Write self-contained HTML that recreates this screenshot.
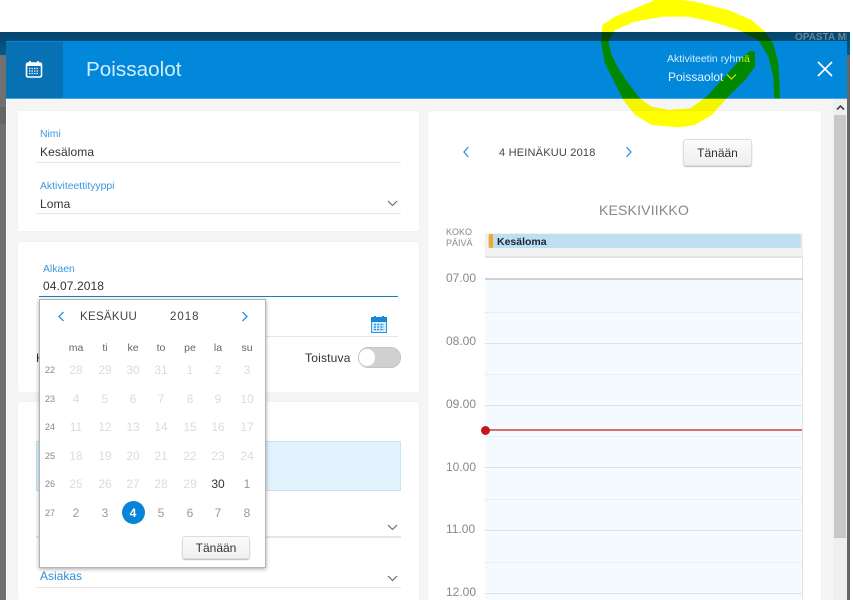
<!DOCTYPE html>
<html><head><meta charset="utf-8"><style>
html,body{margin:0;padding:0;width:853px;height:600px;overflow:hidden;background:#fff}
body{position:relative;font-family:"Liberation Sans",sans-serif;color:#333;font-size:12px}
div,span.t,svg{position:absolute}
.t{position:absolute;white-space:nowrap;line-height:14px;transform:translateY(-7px)}
.c{transform:translate(-50%,-7px);text-align:center}
.card{background:#fff;border-radius:2px;box-shadow:0 0 1px #e0e0e0}
.lab{font-size:10.4px;color:#3b98e0}
.val{font-size:12px;color:#333;letter-spacing:.1px}
.ln{height:1px;background:#e6e6e6}
.wk{font-size:9px;color:#888}
.dh{font-size:10.5px;color:#666}
.d{font-size:12px;color:#dcdcdc}
.a{color:#999}
.hr{left:485px;width:317px;height:1px;background:#dde3e8}
.dash{left:485px;width:317px;height:0;border-top:1px dotted #dfe4e8}
.tm{left:446px;font-size:12px;color:#888}
.btn{background:linear-gradient(#fbfbfb,#efefef);border:1px solid #ddd;border-radius:3px;box-shadow:0 1px 1px #bbb;box-sizing:border-box;text-align:center;font-size:12px;color:#333}
</style></head><body>
<!-- backdrop -->
<div style="left:0;top:55px;width:850px;height:545px;background:#707070"></div>
<div style="left:0;top:107px;width:6px;height:17px;background:#666"></div>
<div style="left:0;top:32px;width:850px;height:23px;background:linear-gradient(#05446c,#045a8c)"></div>
<span class="t" style="left:795px;top:38px;font-size:10px;font-weight:bold;color:#6d8596;width:52px;overflow:hidden">OPASTA MI</span>
<div style="left:847px;top:55px;width:3px;height:545px;background:#666"></div>
<!-- modal -->
<div style="left:6px;top:41px;width:841px;height:559px;background:#f5f5f5"></div>
<div style="left:6px;top:99px;width:1px;height:501px;background:#fff"></div>
<div style="left:6px;top:41px;width:841px;height:58px;background:#0288db;border-bottom:1px solid #47a8e6;box-sizing:border-box"></div>
<div style="left:6px;top:42px;width:57px;height:56px;background:#0871b3"></div>
<svg style="left:25px;top:60px" width="19" height="19" viewBox="0 0 19 19"><rect x="1.500" y="3" width="15" height="14" rx="1.500" fill="none" stroke="#fff" stroke-width="1.600"/><rect x="1.500" y="3" width="15" height="3" fill="#fff"/><path d="M5 1v3M13 1v3" stroke="#fff" stroke-width="1.600"/><path d="M4 8.500h10M4 11h10M4 13.500h10" stroke="#fff" stroke-width="1.200" stroke-dasharray="1.400 1.100"/></svg>
<span class="t" style="left:86px;top:70px;font-size:20.700px;line-height:24px;transform:translateY(-12px);color:#d2ecfb">Poissaolot</span>
<span class="t" style="left:667px;top:59px;font-size:10.500px;color:#d8eefb">Aktiviteetin ryhmä</span>
<span class="t" style="left:668px;top:77px;font-size:12px;color:#e6f4fd">Poissaolot</span>
<svg style="left:726px;top:73px" width="11" height="8" viewBox="0 0 11 8"><path d="M1 1.500l4.500 4.500 4.500-4.500" fill="none" stroke="#dff2ff" stroke-width="1.100"/></svg>
<svg style="left:816px;top:60px" width="18" height="18" viewBox="0 0 18 18"><path d="M2 2l14 14M16 2L2 16" stroke="#fff" stroke-width="1.700"/></svg>
<!-- scrollbar -->
<div style="left:833px;top:99px;width:14px;height:501px;background:#efefef"></div>
<div style="left:834px;top:115px;width:12px;height:423px;background:#c8c8c8"></div>
<svg style="left:836px;top:104px" width="9" height="7" viewBox="0 0 9 7"><path d="M1 5.500l3.500-3.500 3.500 3.500" fill="none" stroke="#444" stroke-width="1.600"/></svg>
<!-- cards -->
<div class="card" style="left:18px;top:111px;width:401px;height:120px"></div>
<div class="card" style="left:18px;top:242px;width:401px;height:150px"></div>
<div class="card" style="left:18px;top:402px;width:401px;height:198px"></div>
<div class="card" style="left:428px;top:111px;width:393px;height:489px"></div>
<!-- card 1 -->
<span class="t lab" style="left:40px;top:135px">Nimi</span>
<span class="t val" style="left:40px;top:152px">Kesäloma</span>
<div class="ln" style="left:36px;top:162px;width:365px"></div>
<span class="t lab" style="left:40px;top:187px">Aktiviteettityyppi</span>
<span class="t val" style="left:40px;top:204px">Loma</span>
<svg style="left:387px;top:200px" width="11" height="7" viewBox="0 0 11 7"><path d="M1 1l4.500 4.500L10 1" fill="none" stroke="#666" stroke-width="1.100"/></svg>
<div class="ln" style="left:36px;top:213px;width:365px"></div>
<!-- card 2 -->
<span class="t lab" style="left:43px;top:270px">Alkaen</span>
<span class="t val" style="left:43px;top:286px">04.07.2018</span>
<div style="left:39px;top:296px;width:359px;height:1px;background:#1a7dbd"></div>
<div class="ln" style="left:39px;top:336px;width:359px"></div>
<svg style="left:371px;top:316px" width="17" height="17" viewBox="0 0 17 17"><rect x=".5" y="1.500" width="15" height="15" fill="#d4ebfa" stroke="#2a96dc"/><rect x="0" y="1" width="16" height="5" fill="#1688d6"/><path d="M4 0v3M12 0v3" stroke="#1688d6" stroke-width="2"/><path d="M3 8.500h10M3 11h10M3 13.500h10" stroke="#1688d6" stroke-width="1.300" stroke-dasharray="2 1.200"/></svg>
<span class="t" style="left:36px;top:358px;font-size:12px;color:#333">K</span>
<span class="t" style="left:305px;top:358px;font-size:12px;color:#333;letter-spacing:.2px">Toistuva</span>
<div style="left:358px;top:347px;width:43px;height:21px;border-radius:11px;background:#d0d0d0;box-shadow:inset 0 0 1px #888"></div>
<div style="left:359px;top:349px;width:16px;height:17px;border-radius:9px;background:#fff"></div>
<!-- card 3 -->
<div style="left:36px;top:441px;width:365px;height:50px;box-sizing:border-box;background:#e1f2fd;border:1px solid #c5e5f8"></div>
<div class="ln" style="left:36px;top:536px;width:365px;height:2px"></div>
<svg style="left:387px;top:524px" width="11" height="7" viewBox="0 0 11 7"><path d="M1 1l4.500 4.500L10 1" fill="none" stroke="#666" stroke-width="1.100"/></svg>
<span class="t" style="left:40px;top:576px;font-size:12px;color:#2d8fd8">Asiakas</span>
<svg style="left:387px;top:575px" width="11" height="7" viewBox="0 0 11 7"><path d="M1 1l4.500 4.500L10 1" fill="none" stroke="#666" stroke-width="1.100"/></svg>
<div class="ln" style="left:36px;top:587px;width:365px"></div>
<!-- popup -->
<div style="left:39px;top:299px;width:227px;height:269px;box-sizing:border-box;background:#fff;border:1px solid #b5b5b5;box-shadow:0 1px 4px rgba(0,0,0,.35)"></div>
<svg style="left:57px;top:311px" width="8" height="11" viewBox="0 0 8 11"><path d="M6.500 1L2 5.500 6.500 10" fill="none" stroke="#2d92dc" stroke-width="1.300"/></svg>
<svg style="left:241px;top:311px" width="8" height="11" viewBox="0 0 8 11"><path d="M1.500 1L6 5.500 1.500 10" fill="none" stroke="#2d92dc" stroke-width="1.300"/></svg>
<span class="t" style="left:80px;top:317px;font-size:11.500px;letter-spacing:.3px;color:#444">KESÄKUU</span>
<span class="t" style="left:170px;top:317px;font-size:11.500px;letter-spacing:1px;color:#444">2018</span>
<span class="t c dh" style="left:76px;top:348px">ma</span><span class="t c dh" style="left:105px;top:348px">ti</span><span class="t c dh" style="left:133px;top:348px">ke</span><span class="t c dh" style="left:161px;top:348px">to</span><span class="t c dh" style="left:190px;top:348px">pe</span><span class="t c dh" style="left:218px;top:348px">la</span><span class="t c dh" style="left:247px;top:348px">su</span>
<span class="t c wk" style="left:50px;top:370px">22</span><span class="t c d" style="left:76px;top:370px">28</span><span class="t c d" style="left:105px;top:370px">29</span><span class="t c d" style="left:133px;top:370px">30</span><span class="t c d" style="left:161px;top:370px">31</span><span class="t c d" style="left:190px;top:370px">1</span><span class="t c d" style="left:218px;top:370px">2</span><span class="t c d" style="left:247px;top:370px">3</span>
<span class="t c wk" style="left:50px;top:399px">23</span><span class="t c d" style="left:76px;top:399px">4</span><span class="t c d" style="left:105px;top:399px">5</span><span class="t c d" style="left:133px;top:399px">6</span><span class="t c d" style="left:161px;top:399px">7</span><span class="t c d" style="left:190px;top:399px">8</span><span class="t c d" style="left:218px;top:399px">9</span><span class="t c d" style="left:247px;top:399px">10</span>
<span class="t c wk" style="left:50px;top:427px">24</span><span class="t c d" style="left:76px;top:427px">11</span><span class="t c d" style="left:105px;top:427px">12</span><span class="t c d" style="left:133px;top:427px">13</span><span class="t c d" style="left:161px;top:427px">14</span><span class="t c d" style="left:190px;top:427px">15</span><span class="t c d" style="left:218px;top:427px">16</span><span class="t c d" style="left:247px;top:427px">17</span>
<span class="t c wk" style="left:50px;top:456px">25</span><span class="t c d" style="left:76px;top:456px">18</span><span class="t c d" style="left:105px;top:456px">19</span><span class="t c d" style="left:133px;top:456px">20</span><span class="t c d" style="left:161px;top:456px">21</span><span class="t c d" style="left:190px;top:456px">22</span><span class="t c d" style="left:218px;top:456px">23</span><span class="t c d" style="left:247px;top:456px">24</span>
<span class="t c wk" style="left:50px;top:484px">26</span><span class="t c d" style="left:76px;top:484px">25</span><span class="t c d" style="left:105px;top:484px">26</span><span class="t c d" style="left:133px;top:484px">27</span><span class="t c d" style="left:161px;top:484px">28</span><span class="t c d" style="left:190px;top:484px">29</span><span class="t c d" style="left:218px;top:484px;color:#333">30</span><span class="t c d a" style="left:247px;top:484px">1</span>
<span class="t c wk" style="left:50px;top:513px">27</span><span class="t c d a" style="left:76px;top:513px">2</span><span class="t c d a" style="left:105px;top:513px">3</span>
<div style="left:122px;top:501px;width:23px;height:23px;border-radius:50%;background:#0684d8"></div>
<span class="t c d" style="left:133px;top:513px;color:#fff;font-weight:bold">4</span><span class="t c d a" style="left:161px;top:513px">5</span><span class="t c d a" style="left:190px;top:513px">6</span><span class="t c d a" style="left:218px;top:513px">7</span><span class="t c d a" style="left:247px;top:513px">8</span>
<div class="btn" style="left:182px;top:536px;width:68px;height:23px;line-height:22px">Tänään</div>
<!-- right -->
<svg style="left:462px;top:146px" width="8" height="12" viewBox="0 0 8 12"><path d="M6.500 1L2 6l4.500 5" fill="none" stroke="#2d92dc" stroke-width="1.300"/></svg>
<svg style="left:625px;top:146px" width="8" height="12" viewBox="0 0 8 12"><path d="M1.500 1L6 6l-4.500 5" fill="none" stroke="#2d92dc" stroke-width="1.300"/></svg>
<span class="t" style="left:499px;top:153px;font-size:11px;letter-spacing:.2px;color:#444">4 HEINÄKUU 2018</span>
<div class="btn" style="left:683px;top:139px;width:69px;height:27px;line-height:26px">Tänään</div>
<span class="t c" style="left:644px;top:210px;font-size:14px;color:#888;letter-spacing:.2px">KESKIVIIKKO</span>
<span class="t" style="left:446px;top:232px;font-size:9px;color:#888">KOKO</span>
<span class="t" style="left:446px;top:243px;font-size:9px;color:#888">PÄIVÄ</span>
<div style="left:485px;top:233px;width:318px;height:25px;background:#f1f1f1;border-bottom:2px solid #e4e4e4;box-sizing:border-box"></div>
<div style="left:488px;top:234px;width:313px;height:14px;background:#bedff2;border-radius:2px"></div>
<div style="left:489px;top:234px;width:4px;height:14px;background:#f5a623;border-radius:1px"></div>
<span class="t" style="left:497px;top:242px;font-size:10.500px;font-weight:bold;color:#223">Kesäloma</span>
<div style="left:485px;top:280px;width:317px;height:320px;background:#f5faff"></div>
<div style="left:802px;top:258px;width:1px;height:342px;background:#e2e2e2"></div>
<div style="left:485px;top:278px;width:318px;height:2px;background:#cfcfcf"></div>
<div class="dash" style="top:312px"></div><div class="dash" style="top:374px"></div><div class="dash" style="top:436px"></div><div class="dash" style="top:499px"></div><div class="dash" style="top:562px"></div>
<div class="hr" style="top:343px"></div><div class="hr" style="top:405px"></div><div class="hr" style="top:467px"></div><div class="hr" style="top:530px"></div><div class="hr" style="top:593px"></div>
<span class="t tm" style="top:278px">07.00</span><span class="t tm" style="top:341px">08.00</span><span class="t tm" style="top:404px">09.00</span><span class="t tm" style="top:467px">10.00</span><span class="t tm" style="top:529px">11.00</span><span class="t tm" style="top:592px">12.00</span>
<div style="left:485px;top:429px;width:317px;height:2px;background:#d66f6f"></div>
<div style="left:481px;top:426px;width:9px;height:9px;border-radius:50%;background:#c8161d"></div>
<!-- scribble -->
<svg style="left:595px;top:0;mix-blend-mode:multiply" width="195" height="130" viewBox="0 0 585 390"><polygon fill="#ffff00" points="555,295 553,240 550,190 535,130 510,95 470,60 400,30 300,5 260,0 180,0 120,25 60,50 22,75 18,130 30,190 60,250 85,300 120,345 170,375 250,382 300,375 350,345 400,290 450,240 480,200 480,155 465,152 430,185 380,240 335,290 285,325 220,330 170,320 135,295 100,250 70,205 50,165 40,125 60,90 120,65 205,50 280,50 350,65 430,90 490,120 520,170 535,230 538,295"/></svg>
</body></html>
